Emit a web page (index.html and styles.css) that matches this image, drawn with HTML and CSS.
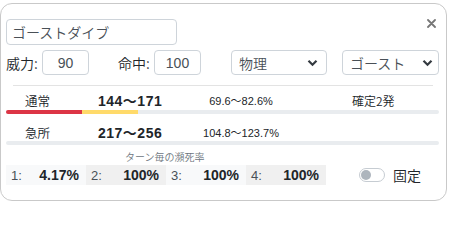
FILE: index.html
```html
<!DOCTYPE html>
<html lang="ja">
<head>
<meta charset="utf-8">
<link rel="stylesheet" href="styles.css">
</head>
<body>
<div class="card">
  <button class="close" aria-label="close">
    <svg width="9" height="9" viewBox="0 0 9 9"><path d="M1 1L8 8M8 1L1 8" stroke="#777" stroke-width="1.8" stroke-linecap="round"/></svg>
  </button>
  <div class="name-row">
    <input class="name" type="text" value="ゴーストダイブ">
  </div>
  <div class="form-row">
    <span class="lbl">威力:</span>
    <input class="num" type="text" value="90">
    <span class="lbl lbl2">命中:</span>
    <input class="num" type="text" value="100">
    <div class="select sel1"><span>物理</span><svg class="chev" width="11" height="8" viewBox="0 0 11 8"><path d="M1.5 1.8L5.5 5.8L9.5 1.8" fill="none" stroke="#343a40" stroke-width="2.2"/></svg></div>
    <div class="select sel2"><span>ゴースト</span><svg class="chev" width="11" height="8" viewBox="0 0 11 8"><path d="M1.5 1.8L5.5 5.8L9.5 1.8" fill="none" stroke="#343a40" stroke-width="2.2"/></svg></div>
  </div>
  <div class="divider"></div>
  <div class="dmg-row">
    <span class="kind">通常</span>
    <span class="dmg">144〜171</span>
    <span class="pct">69.6〜82.6%</span>
    <span class="ko">確定2発</span>
  </div>
  <div class="bar"><div class="seg red" style="width:76px"></div><div class="seg yellow" style="width:56px"></div></div>
  <div class="dmg-row row2">
    <span class="kind">急所</span>
    <span class="dmg">217〜256</span>
    <span class="pct">104.8〜123.7%</span>
    <span class="ko"></span>
  </div>
  <div class="bar bar2"></div>
  <div class="caption">ターン毎の瀕死率</div>
  <div class="bottom">
    <div class="cells">
      <div class="cell"><span class="t">1:</span><b>4.17%</b></div>
      <div class="cell alt"><span class="t">2:</span><b>100%</b></div>
      <div class="cell"><span class="t">3:</span><b>100%</b></div>
      <div class="cell alt"><span class="t">4:</span><b>100%</b></div>
    </div>
    <label class="switch"><span class="track"><span class="knob"></span></span><span class="sw-label">固定</span></label>
  </div>
</div>
</body>
</html>
```
FILE: styles.css
```css
* { box-sizing: border-box; }
body {
  margin: 0;
  font-family: "Noto Sans CJK JP", sans-serif;
  font-weight: 350;
  color: #212529;
  background: #fff;
}
.card {
  position: relative;
  margin-top: 3px;
  width: 447px;
  height: 198px;
  border: 1px solid #c9c9c9;
  border-radius: 12px;
  padding: 15px 7px 0 5px;
}
.close {
  position: absolute;
  top: 13px;
  right: 8px;
  border: 0;
  background: none;
  padding: 2px;
  line-height: 0;
}
.name-row { display: flex; }
.name {
  width: 171px;
  height: 26px;
  border: 1px solid #ced4da;
  border-radius: 4px;
  padding: 0 5px;
  font: 350 14px "Noto Sans CJK JP", sans-serif;
  color: #495057;
}
.form-row {
  display: flex;
  align-items: center;
  margin-top: 5px;
  height: 25px;
}
.lbl {
  font-size: 14px;
  width: 36px;
}
.lbl2 { margin-left: 29px; }
.num {
  width: 47px;
  height: 25px;
  border: 1px solid #ced4da;
  border-radius: 4px;
  text-align: center;
  font: 14px "Liberation Sans", sans-serif;
  color: #495057;
}
.select {
  display: flex;
  align-items: center;
  justify-content: space-between;
  height: 25px;
  border: 1px solid #ced4da;
  border-radius: 4px;
  padding: 0 8px 0 7px;
  font-size: 14px;
  color: #495057;
}
.sel1 { width: 96px; margin-left: 30px; }
.sel2 { width: 97px; margin-left: 15px; padding-left: 7px; padding-right: 5px; }
.divider {
  height: 1px;
  background: #e3e3e3;
  margin: 10px 6px 0 7px;
}
.dmg-row {
  display: grid;
  grid-template-columns: 92px 82px 122px 1fr;
  align-items: center;
  height: 18px;
  margin-top: 4px;
}
.row2 { margin-top: 8px; }
.kind {
  padding-left: 19px;
  font-size: 12.5px;
}
.dmg {
  font: bold 14px "Liberation Sans", "Noto Sans CJK JP", sans-serif;
  letter-spacing: 0.5px;
}
.pct {
  text-align: center;
  font: 11px "Liberation Sans", "Noto Sans CJK JP", sans-serif;
}
.ko {
  padding-left: 50px;
  font-size: 12px;
}
.bar {
  display: flex;
  height: 4px;
  margin-top: 2px;
  border-radius: 2px;
  background: #e9ecef;
  overflow: hidden;
}
.bar2 { margin-top: 1px; }
.seg { height: 100%; }
.red { background: #dc3545; }
.yellow { background: #ffda6a; }
.caption {
  margin-top: 5px;
  padding-left: 119px;
  font-size: 10px;
  color: #6c757d;
  height: 14px;
  line-height: 14px;
}
.bottom {
  display: flex;
  align-items: center;
  margin-top: 1px;
}
.cells { display: flex; }
.cell {
  display: flex;
  width: 80px;
  height: 20px;
  align-items: center;
  justify-content: space-between;
  padding: 0 7px 0 5px;
  background: #f8f9fa;
  font: 13px "Liberation Sans", sans-serif;
}
.cell.alt { background: #f0f0f0; }
.cell .t { color: #495057; }
.cell b { font-weight: bold; font-size: 14px; }
.switch {
  display: flex;
  align-items: center;
  margin-left: 33px;
}
.track {
  position: relative;
  width: 26px;
  height: 14px;
  border: 1px solid #c6ccd2;
  border-radius: 7px;
  background: #fff;
}
.knob {
  position: absolute;
  left: 1px;
  top: 1px;
  width: 10px;
  height: 10px;
  border-radius: 50%;
  background: #adb5bd;
}
.sw-label {
  margin-left: 8px;
  font-size: 14px;
}
```
